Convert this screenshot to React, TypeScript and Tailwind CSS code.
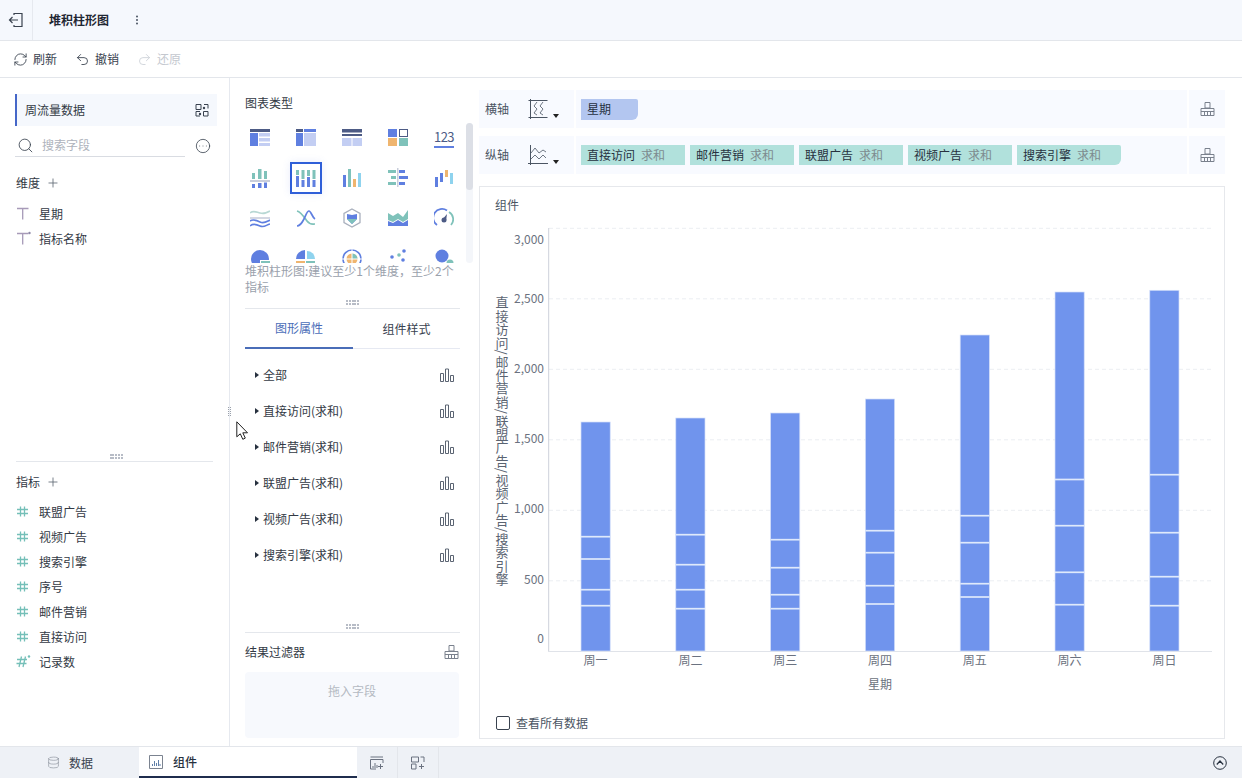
import { CircleEllipsis, Database, Plus, Redo2, RefreshCw, Search, Undo2 } from 'lucide-react';

const DARK = '#4d5b85';
const BLUE = '#5f7fe0';
const LIGHT = '#c3cef3';
const TEAL = '#7fc2ba';
const ORANGE = '#efb56f';
const SKY = '#8fd3ee';

type Box = [number, number, number, number, string];

const Rects = ({ items }: { items: Box[] }) => (
  <svg width="20" height="20" viewBox="0 0 20 20">
    {items.map(([x, y, w, h, c], i) => (
      <rect key={i} x={x} y={y} width={w} height={h} fill={c} />
    ))}
  </svg>
);

const Svg20 = ({ children }: { children: React.ReactNode }) => (
  <svg width="20" height="20" viewBox="0 0 20 20" fill="none">
    {children}
  </svg>
);

const chartIcons: React.ReactNode[] = [
  <Rects items={[[0, 1, 20, 3, DARK], [0, 5, 8, 13, BLUE], [9, 5, 11, 3.5, LIGHT], [9, 10, 11, 3.5, LIGHT], [9, 15, 11, 3, LIGHT]]} />,
  <Rects items={[[0, 1, 7, 3, DARK], [8, 1, 12, 3, BLUE], [0, 5, 7, 13, BLUE], [8, 5, 12, 13, LIGHT]]} />,
  <Rects items={[[0, 1, 20, 3.5, DARK], [0, 6, 20, 2, DARK], [0, 10, 9.5, 8, LIGHT], [10.5, 10, 9.5, 8, LIGHT]]} />,
  <svg width="20" height="20" viewBox="0 0 20 20" fill="none">
    <rect x="0" y="1" width="9" height="8" fill={BLUE} />
    <rect x="11.5" y="1.5" width="8" height="7" stroke={DARK} />
    <rect x="0" y="10" width="9" height="8" fill={ORANGE} />
    <rect x="11" y="10" width="9" height="8" fill={TEAL} />
  </svg>,
  <div className="flex w-5 flex-col items-center">
    <span className="text-[13px] leading-[15px] tracking-[-0.5px] text-[#4d5b85]">123</span>
    <span className="mt-[2px] h-[2px] w-5 bg-[#5f7fe0]" />
  </div>,
  <Rects items={[[2, 5, 3, 6, TEAL], [8, 1, 3.5, 10, TEAL], [14, 3, 3, 8, TEAL], [0, 12, 20, 2, '#c9cedb'], [2, 16, 3, 4, BLUE], [8, 15, 3.5, 5, BLUE], [14, 14.5, 3, 5.5, BLUE]]} />,
  <Rects items={[[0, 2, 3, 5, TEAL], [0, 8, 3, 11, BLUE], [5.5, 2, 3, 9, TEAL], [5.5, 12, 3, 7, BLUE], [11, 2, 3, 6, TEAL], [11, 9, 3, 10, BLUE], [16.5, 2, 3, 9, TEAL], [16.5, 12, 3, 7, BLUE]]} />,
  <Rects items={[[1, 7, 3, 12, BLUE], [6, 1, 3, 18, TEAL], [11, 11, 3, 8, ORANGE], [16, 5, 3, 14, SKY]]} />,
  <Rects items={[[0, 2, 8, 3, TEAL], [11, 2, 6, 3, BLUE], [3, 8, 5, 3, TEAL], [11, 8, 9, 3, BLUE], [0, 14, 8, 3, TEAL], [11, 14, 6, 3, BLUE], [9, 0, 1.5, 19, '#c9cedb']]} />,
  <Rects items={[[1, 9, 3, 10, BLUE], [6, 5, 3, 9, BLUE], [11, 2, 3, 7, ORANGE], [16, 5, 3, 11, SKY]]} />,
  <Svg20>
    <path d="M0 5c3-3 6-1 10 0s6 0 10-2" stroke="#b8d8d4" strokeWidth="1.6" />
    <path d="M0 10h20" stroke="#c9cedb" strokeWidth="1.6" />
    <path d="M0 13c3-2 6-1 10 1s6 0 10-2" stroke={BLUE} strokeWidth="1.6" />
    <path d="M0 18c3-3 6-2 10 0s6-1 10-2" stroke={BLUE} strokeWidth="1.6" />
  </Svg20>,
  <Svg20>
    <path d="M1 3c4 1 7 6 10 10s5 3 8 3" stroke={TEAL} strokeWidth="1.7" />
    <path d="M1 18c3 0 5-3 7-7s3-8 5-8 3 6 6 8" stroke={BLUE} strokeWidth="1.7" />
  </Svg20>,
  <Svg20>
    <path d="M10 1l8 4.500v9L10 19l-8-4.500v-9z" stroke="#a9b0bd" strokeWidth="1.3" />
    <path d="M5 6l5 1 5-1v5l-5 5-5-5z" fill={BLUE} />
    <path d="M5 11l5 5 5-5z" fill={TEAL} />
  </Svg20>,
  <Svg20>
    <path d="M0 5l5 3 5-3 5 4 5-7v9l-5 3-5-3-5 3-5-2z" fill={TEAL} />
    <path d="M0 13l5 2 5-3 5 3 5-3v6H0z" fill={BLUE} />
  </Svg20>,
  <Svg20>
    <path d="M3 17A8.500 8.500 0 0 1 13 2.500" stroke={BLUE} strokeWidth="1.8" />
    <path d="M15 4a8.500 8.500 0 0 1 2 13" stroke={TEAL} strokeWidth="1.8" />
    <path d="M8 12l5-6-1 7z" fill={DARK} />
    <circle cx="10" cy="12" r="2.500" fill={DARK} />
  </Svg20>,
  <Svg20>
    <circle cx="10" cy="11" r="9" fill={BLUE} />
    <rect x="10" y="12" width="10" height="8" fill="#fff" />
    <rect x="11" y="13" width="9" height="7" fill={TEAL} />
  </Svg20>,
  <Svg20>
    <path d="M9 2a9 9 0 0 0-9 9h9z" fill={BLUE} />
    <path d="M11 3v8h8a8 8 0 0 0-8-8z" fill={SKY} />
    <rect x="0" y="13" width="9" height="7" fill={ORANGE} />
    <rect x="10" y="13" width="9" height="7" fill={TEAL} />
  </Svg20>,
  <Svg20>
    <circle cx="10" cy="11" r="9" stroke={BLUE} strokeWidth="1.6" />
    <circle cx="10" cy="11" r="5.500" fill={ORANGE} />
    <path d="M10 11V5.500A5.500 5.500 0 0 1 15.500 11z" fill={TEAL} />
    <path d="M10 1v20M0 11h20" stroke="#fff" strokeWidth="1" />
  </Svg20>,
  <Svg20>
    <circle cx="4" cy="9" r="1.800" fill={BLUE} />
    <circle cx="11" cy="7" r="1.800" fill={TEAL} />
    <circle cx="16" cy="3" r="1.800" fill={BLUE} />
    <circle cx="15" cy="12" r="1.800" fill={BLUE} />
    <circle cx="6" cy="17" r="1.800" fill={TEAL} />
  </Svg20>,
  <Svg20>
    <circle cx="8" cy="8" r="6.500" fill={BLUE} />
    <circle cx="16" cy="15" r="3.500" fill={TEAL} />
  </Svg20>,
];

const Broom = () => (
  <svg width="15" height="16" viewBox="0 0 15 16" fill="none" stroke="#7a818d" strokeWidth="1">
    <path d="M5 1.500h5V7H5z M1 7.500h13v7H1z M1 10.500h13 M4.500 11v3.500 M7.500 11v3.500 M10.500 11v3.500" />
  </svg>
);

const BarsIcon = () => (
  <svg width="16" height="14" viewBox="0 0 16 14" fill="none" stroke="#5b6472" strokeWidth="1">
    <path d="M1.500 5.500h3v8h-3z M6.500 1h3v12.500h-3z M11.500 7.500h3v6h-3z" />
  </svg>
);

const Grip = () => (
  <div className="grid w-[13px] grid-cols-5 gap-x-[1px] gap-y-[1px]">
    {Array.from({ length: 10 }).map((_, i) => (
      <span key={i} className="h-[2px] w-[2px] bg-[#b7bcc6]" />
    ))}
  </div>
);

const Tee = ({ star }: { star?: boolean }) => (
  <svg width="15" height="15" viewBox="0 0 15 15" fill="none" stroke="#a79ab8" strokeWidth="1.300">
    <path d="M1 2.500h11.500 M6.700 2.500v11" />
    {star && <circle cx="13.500" cy="2" r="1.200" fill="#8f8aa8" stroke="none" />}
  </svg>
);

const Hash = ({ star }: { star?: boolean }) => (
  <svg width="15" height="15" viewBox="0 0 15 15" fill="none" stroke="#74bfb8" strokeWidth="1.300">
    {star ? (
      <>
        <path d="M1 5.500h10 M0.500 9.500h10 M5.500 2.500l-2.500 10.500 M9.500 2.500l-2.500 10.500" />
        <circle cx="13" cy="2.500" r="1.200" fill="#74bfb8" stroke="none" />
      </>
    ) : (
      <path d="M1 5.500h11 M1 9.500h11 M4.500 2.500v10 M8.500 2.500v10" />
    )}
  </svg>
);

const FieldRow = ({ icon, label }: { icon: React.ReactNode; label: string }) => (
  <div className="flex h-[25px] items-center">
    <span className="flex w-[23px] items-center">{icon}</span>
    <span className="text-xs text-[#333a45]">{label}</span>
  </div>
);

const AxisRow = ({ label, icon, children }: { label: string; icon: React.ReactNode; children: React.ReactNode }) => (
  <div className="flex h-[38px] gap-[2px]">
    <div className="flex w-[95px] items-center bg-[#f8faff] pl-[6px]">
      <span className="w-[43px] text-xs text-[#4b5563]">{label}</span>
      {icon}
      <span className="ml-[5px] mt-[13px] h-0 w-0 border-x-[3px] border-t-[4px] border-x-transparent border-t-[#222]" />
    </div>
    <div className="flex flex-1 items-center gap-[5px] bg-[#f8faff] pl-[5px]">{children}</div>
    <div className="flex w-[36px] items-center justify-center bg-[#f8faff]">
      <Broom />
    </div>
  </div>
);

const Chip = ({ name, last }: { name: string; last?: boolean }) => (
  <div className={`flex h-5 w-[104px] items-center gap-[6px] bg-[#b1e1dc] pl-[6px] text-xs ${last ? 'rounded-tr-[2px] rounded-br-[6px]' : ''}`}>
    <span className="text-[#27313f]">{name}</span>
    <span className="text-[#7d8b8f]">求和</span>
  </div>
);

const ticks = [
  { v: '3,000', y: 228.3, ly: 240 },
  { v: '2,500', y: 298.8, ly: 299 },
  { v: '2,000', y: 369.3, ly: 369 },
  { v: '1,500', y: 439.8, ly: 439 },
  { v: '1,000', y: 510.3, ly: 509 },
  { v: '500', y: 580.8, ly: 580 },
  { v: '0', y: 651.3, ly: 639 },
];

const bars = [
  { name: '周一', x: 581, top: 422, seps: [536.7, 559, 589.7, 605.7] },
  { name: '周二', x: 675.8, top: 418, seps: [534.7, 564.7, 589.7, 608.7] },
  { name: '周三', x: 770.6, top: 413, seps: [539.7, 567.7, 594.7, 608.7] },
  { name: '周四', x: 865.4, top: 399, seps: [530.7, 552.7, 585.7, 604] },
  { name: '周五', x: 960.2, top: 335, seps: [515.7, 542.7, 583.7, 597] },
  { name: '周六', x: 1055, top: 292, seps: [479.5, 525.7, 572.3, 604.7] },
  { name: '周日', x: 1149.8, top: 290.3, seps: [474.7, 532.7, 576.7, 605.7] },
];

const Chart = () => (
  <svg width="744" height="480" viewBox="480 225 744 480" className="block">
    {ticks.slice(0, 6).map((t) => (
      <line key={t.v} x1="549" x2="1212" y1={t.y} y2={t.y} stroke="#eceef2" strokeDasharray="4 3" />
    ))}
    {ticks.map((t) => (
      <text key={t.v} x="544" y={t.ly + 4} textAnchor="end" className="fill-[#6b7280] text-xs">
        {t.v}
      </text>
    ))}
    <line x1="548.700" x2="548.700" y1="228" y2="651.500" stroke="#cdd1da" />
    <line x1="548" x2="1212" y1="651.500" y2="651.500" stroke="#e0e3e9" />
    {bars.map((b) => (
      <g key={b.name}>
        <rect x={b.x} y={b.top} width="29.200" height={651 - b.top} fill="#7094ed" stroke="#d3dff9" strokeWidth="0.700" />
        {b.seps.map((s) => (
          <line key={s} x1={b.x} x2={b.x + 29.2} y1={s} y2={s} stroke="#dfe9fb" strokeWidth="1.700" />
        ))}
        <text x={b.x + 14.6} y="665" textAnchor="middle" className="fill-[#6b7280] text-xs">
          {b.name}
        </text>
      </g>
    ))}
    <text x="880" y="689" textAnchor="middle" className="fill-[#6b7280] text-xs">
      星期
    </text>
    <text x="502" y="296" className="fill-[#5b6472] text-[13px] tracking-[0.4px] [writing-mode:vertical-rl]">
      直接访问/邮件营销/联盟广告/视频广告/搜索引擎
    </text>
  </svg>
);

const props = ['全部', '直接访问(求和)', '邮件营销(求和)', '联盟广告(求和)', '视频广告(求和)', '搜索引擎(求和)'];

export default function App() {
  return (
    <div className="relative flex h-[778px] w-[1242px] flex-col overflow-hidden bg-white font-['Noto_Sans_CJK_SC','Noto_Sans',sans-serif] text-xs">
      {/* top bar */}
      <div className="flex h-[41px] shrink-0 items-center border-b border-[#e3e6eb] bg-[#f5f8fd]">
        <div className="flex h-full w-[33px] items-center justify-center border-r border-[#e6e9ef]">
          <svg width="16" height="16" viewBox="0 0 16 16" fill="none" stroke="#39424f" strokeWidth="1.200">
            <path d="M6 3V1.500h8v13H6V13 M10 8H1.500 M4.500 5L1.500 8l3 3" />
          </svg>
        </div>
        <span className="ml-4 font-bold text-[#1f2733]">堆积柱形图</span>
        <svg className="ml-[26px]" width="4" height="10" viewBox="0 0 4 10" fill="#4b5563">
          <circle cx="2" cy="1.500" r="1" />
          <circle cx="2" cy="5" r="1" />
          <circle cx="2" cy="8.500" r="1" />
        </svg>
      </div>

      {/* toolbar */}
      <div className="flex h-[37px] shrink-0 items-center border-b border-[#e3e6eb] pl-[13px]">
        <RefreshCw size={15} strokeWidth={1.4} className="text-[#39424f]" />
        <span className="ml-[5px] text-[#39424f]">刷新</span>
        <Undo2 size={15} strokeWidth={1.4} className="ml-[18px] text-[#39424f]" />
        <span className="ml-[5px] text-[#39424f]">撤销</span>
        <Redo2 size={15} strokeWidth={1.4} className="ml-[18px] text-[#cdd1d8]" />
        <span className="ml-[5px] text-[#c4c8cf]">还原</span>
      </div>

      <div className="flex min-h-0 flex-1">
        {/* fields panel */}
        <div className="relative flex w-[230px] shrink-0 flex-col border-r border-[#e6e9ef] pl-[15px] pr-3 pt-4">
          <div className="flex h-8 items-center justify-between border-l-2 border-[#4567c8] bg-[#f5f8fd] pl-2 pr-[8px]">
            <span className="text-[#333a45]">周流量数据</span>
            <svg width="14" height="14" viewBox="0 0 14 14" fill="none" stroke="#39424f">
              <path d="M1 1.500h5v5H1z M8.500 8.500H13V13H8.500z M1 8.500h4 M1 8.500V13h4 M9 1.500h4v4" />
              <circle cx="9" cy="5" r="1.200" fill="#39424f" stroke="none" />
              <circle cx="5" cy="11" r="1.200" fill="#39424f" stroke="none" />
            </svg>
          </div>
          <div className="mt-2 flex items-center">
            <div className="flex h-[23px] w-[170px] items-center border-b border-[#d9dce2] pl-[2px]">
              <Search size={17} strokeWidth={1.2} className="text-[#39424f]" />
              <span className="ml-[8px] text-[#aeb3bc]">搜索字段</span>
            </div>
            <CircleEllipsis size={16} strokeWidth={1.2} className="ml-[10px] text-[#39424f]" />
          </div>
          <div className="ml-px mt-[18px] flex h-4 items-center">
            <span className="text-[#333a45]">维度</span>
            <Plus size={14} strokeWidth={1.4} className="ml-[6px] text-[#5b6472]" />
          </div>
          <div className="ml-px mt-[10px] flex flex-col">
            <FieldRow icon={<Tee />} label="星期" />
            <FieldRow icon={<Tee star />} label="指标名称" />
          </div>
          <div className="mt-auto flex flex-col">
            <div className="flex justify-center">
              <Grip />
            </div>
            <div className="ml-px mt-[2px] h-px w-[197px] bg-[#e4e7ec]" />
            <div className="ml-px mt-3 flex h-4 items-center">
              <span className="text-[#333a45]">指标</span>
              <Plus size={14} strokeWidth={1.4} className="ml-[6px] text-[#5b6472]" />
            </div>
            <div className="ml-px mt-[9px] flex flex-col pb-[72px]">
              <FieldRow icon={<Hash />} label="联盟广告" />
              <FieldRow icon={<Hash />} label="视频广告" />
              <FieldRow icon={<Hash />} label="搜索引擎" />
              <FieldRow icon={<Hash />} label="序号" />
              <FieldRow icon={<Hash />} label="邮件营销" />
              <FieldRow icon={<Hash />} label="直接访问" />
              <FieldRow icon={<Hash star />} label="记录数" />
            </div>
          </div>
        </div>

        {/* config panel */}
        <div className="relative flex w-[240px] shrink-0 flex-col pl-[15px] pr-[10px]">
          <div className="mt-[17px] h-4 leading-4 text-[#333a45]">图表类型</div>
          <div className="relative -ml-[8px] mt-[7px] h-[145px] w-[230px] overflow-hidden">
            <div className="grid grid-cols-5">
              {chartIcons.map((icon, i) => (
                <div key={i} className="flex h-10 items-center justify-center">
                  {i === 6 ? (
                    <div className="flex h-8 w-8 items-center justify-center border-2 border-[#2f5fd8] shadow-[0_0_8px_rgba(70,110,220,0.12)]">
                      {icon}
                    </div>
                  ) : (
                    icon
                  )}
                </div>
              ))}
            </div>
          </div>
          <div className="absolute left-[236px] top-[45px] h-[140px] w-[7px] rounded bg-[#f4f6fa]">
            <div className="h-[67px] w-full rounded bg-[#dcdfe6]" />
          </div>
          <p className="h-8 w-[215px] leading-4 text-[#9aa1ac]">堆积柱形图:建议至少1个维度，至少2个指标</p>
          <div className="mt-[5px] flex justify-center">
            <Grip />
          </div>
          <div className="mt-[3px] h-px bg-[#e4e7ec]" />

          <div className="flex h-[40px]">
            <div className="flex w-[108px] items-center justify-center border-b-2 border-[#4a6db8] text-[#4a6db8]">图形属性</div>
            <div className="flex flex-1 items-center justify-center border-b border-[#e6e9f2] text-[#39424f]">组件样式</div>
          </div>
          <div className="mt-[8px] flex flex-col">
            {props.map((p) => (
              <div key={p} className="flex h-9 items-center pl-[10px] pr-[5px]">
                <span className="h-0 w-0 border-y-[3.5px] border-l-[4px] border-y-transparent border-l-[#27313f]" />
                <span className="ml-1 flex-1 text-[#333a45]">{p}</span>
                <BarsIcon />
              </div>
            ))}
          </div>
          <div className="mt-auto flex flex-col pb-2">
            <div className="flex justify-center">
              <Grip />
            </div>
            <div className="mt-[3px] h-px bg-[#e4e7ec]" />
            <div className="mt-[11px] flex h-4 items-center justify-between pr-px">
              <span className="text-[#333a45]">结果过滤器</span>
              <Broom />
            </div>
            <div className="mt-[12px] flex h-[66px] w-[214px] justify-center rounded-sm bg-[#f7f9fd] pt-[11px] text-[#b4b9c2]">拖入字段</div>
          </div>
        </div>

        {/* preview */}
        <div className="flex min-w-0 flex-1 flex-col pb-[7px] pl-[9px] pr-[17px] pt-3">
          <AxisRow
            label="横轴"
            icon={
              <svg width="20" height="20" viewBox="0 0 20 20" fill="none" stroke="#4b5563">
                <path d="M0.500 1.500h19 M0.500 18.500h19 M2.500 0v20" />
                <path d="M9 3l-3 4 3 3-3 4 3 2 M15 3l-3 4 3 3-3 4 3 2" strokeWidth="0.800" />
              </svg>
            }
          >
            <div className="flex h-[21px] w-[57px] items-center rounded-tr-[2px] rounded-br-[6px] bg-[#b3c6f0] pl-[6px] text-xs text-[#27313f]">星期</div>
          </AxisRow>
          <div className="mt-2">
            <AxisRow
              label="纵轴"
              icon={
                <svg width="20" height="20" viewBox="0 0 20 20" fill="none" stroke="#4b5563">
                  <path d="M0 18.500h20 M2.500 0v20" />
                  <path d="M3 8l4-5 4 5 4-3 3 2 M3 14l4-4 4 4 4-4 3 3" strokeWidth="0.800" />
                </svg>
              }
            >
              <Chip name="直接访问" />
              <Chip name="邮件营销" />
              <Chip name="联盟广告" />
              <Chip name="视频广告" />
              <Chip name="搜索引擎" last />
            </AxisRow>
          </div>
          <div className="mt-3 flex min-h-0 flex-1 flex-col border border-[#e6e8ec]">
            <div className="h-[38px] pl-[15px] pt-[10px] leading-4 text-[#4b5563]">组件</div>
            <Chart />
            <div className="flex flex-1 items-center pl-4 pt-[3px]">
              <span className="h-[14px] w-[14px] rounded-[2px] border border-[#39424f]" />
              <span className="ml-[6px] text-[#4b5563]">查看所有数据</span>
            </div>
          </div>
        </div>
      </div>

      {/* bottom tabs */}
      <div className="flex h-[32px] shrink-0 items-stretch border-t border-[#e3e6eb] bg-[#eef1f6]">
        <div className="flex w-[139px] items-center pl-[47px] text-[#39424f]">
          <Database size={13} strokeWidth={1.2} className="text-[#8b919c]" />
          <span className="ml-[9px]">数据</span>
        </div>
        <div className="flex w-[218px] items-center border-b-2 border-[#1f2d4d] bg-white pl-[9px] font-medium text-[#27313f]">
          <svg className="ml-[1px]" width="14" height="14" viewBox="0 0 14 14" fill="none" stroke="#7b8390">
            <path d="M0.500 0.500h13v13H0.500z" />
            <path d="M3.500 11V9 M5.500 11V6 M7.500 11V8 M9.500 11V5 M11 11V9" stroke="#5f7fa8" />
          </svg>
          <span className="ml-[10px]">组件</span>
        </div>
        <div className="flex w-[41px] items-center justify-center border-r border-[#e3e6eb]">
          <svg width="14" height="14" viewBox="0 0 14 14" fill="none" stroke="#6b7280">
            <path d="M0.500 1H13 M0.500 3.500H13 M0.500 3.500V13H6 M13 3.500V7 M3 12V10 M5 12V7 M7 12V9 M10.500 8v5 M8 10.500h5" />
          </svg>
        </div>
        <div className="flex w-[41px] items-center justify-center border-r border-[#e3e6eb]">
          <svg width="14" height="14" viewBox="0 0 14 14" fill="none" stroke="#6b7280">
            <path d="M0.500 1h7v5h-7z M9.500 1H13v5 M0.500 8H5v5H0.500z M10.500 8v5 M8 10.500h5" />
          </svg>
        </div>
        <div className="ml-auto flex items-center pr-[15px]">
          <svg width="14" height="14" viewBox="0 0 14 14" fill="none" stroke="#27313f">
            <circle cx="7" cy="7" r="6.300" />
            <path d="M3.800 8.500L7 5l3.200 3.500" strokeWidth="1.300" />
          </svg>
        </div>
      </div>

      {/* mouse cursor + splitter handle */}
      <div className="absolute left-[228px] top-[407px] grid w-[3px] grid-cols-2 gap-[1px]">
        {Array.from({ length: 10 }).map((_, i) => (
          <span key={i} className="h-px w-px bg-[#9aa1ac]" />
        ))}
      </div>
      <svg className="absolute left-[236px] top-[421px]" width="13" height="20" viewBox="0 0 13 20" fill="#fff" stroke="#222">
        <path d="M0.800 0.800v15l3.500-3 2.500 5.500 2.500-1.200-2.500-5.300h4.700z" />
      </svg>
    </div>
  );
}
